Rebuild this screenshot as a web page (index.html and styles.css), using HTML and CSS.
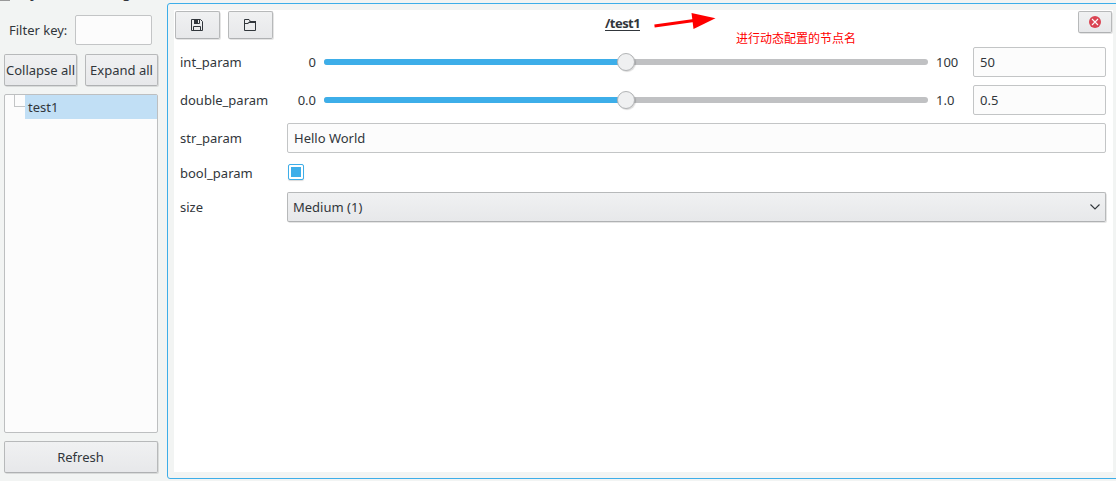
FILE: index.html
```html
<!DOCTYPE html>
<html lang="en">
<head>
<meta charset="utf-8">
<title>Dynamic Reconfigure</title>
<link rel="stylesheet" href="styles.css">
</head>
<body>
<div class="app">
  <div class="titlebar"><span class="title-icon"></span><span class="title">Dynamic Reconfigure</span></div>
  <aside class="sidebar">
    <div class="filter"><span class="filter-label">Filter key:</span><div class="field filter-field"></div></div>
    <div class="actions"><div class="button">Collapse all</div><div class="button">Expand all</div></div>
    <div class="tree"><div class="tree-row"><span class="branch"></span><span class="tree-item">test1</span></div></div>
    <div class="button refresh">Refresh</div>
  </aside>
  <main class="panel">
    <div class="content">
      <header class="head">
        <div class="button tool">
          <svg width="12" height="12" viewBox="0 0 12 12"><path d="M.5.5H9.500L11.500 2.500V11.500H.5Z M2.500 11V7.500H9.500V11 M8.500 1V4.500H3.500" fill="none" stroke="#31363b"/><path d="M3 0H7V5H3Z" fill="#31363b"/></svg>
        </div>
        <div class="button tool">
          <svg width="12" height="12" viewBox="0 0 12 12"><path d="M.5 11.500V.5H5L6.500 2.500H11.500V11.500Z" fill="none" stroke="#31363b"/><path d="M6 2H12V4H5L4 5H1V4H3.500Z" fill="#31363b"/></svg>
        </div>
        <div class="node-name">/test1</div>
        <div class="button close">
          <svg width="12" height="12" viewBox="0 0 12 12"><circle cx="6" cy="6" r="6" fill="#da4453"/><path d="M3 3L9 9M9 3L3 9" stroke="#fcfcfc" stroke-width="1.100"/></svg>
        </div>
      </header>
      <div class="row slider-row">
        <span class="label">int_param</span><span class="min">0</span>
        <div class="slider"><div class="fill"></div><div class="knob"></div></div>
        <span class="max">100</span><div class="field">50</div>
      </div>
      <div class="row slider-row">
        <span class="label">double_param</span><span class="min">0.0</span>
        <div class="slider"><div class="fill"></div><div class="knob"></div></div>
        <span class="max">1.0</span><div class="field">0.5</div>
      </div>
      <div class="row"><span class="label">str_param</span><div class="field">Hello World</div></div>
      <div class="row check-row"><span class="label">bool_param</span><div class="checkbox"></div></div>
      <div class="row"><span class="label">size</span>
        <div class="button combo"><span>Medium (1)</span><svg width="10" height="6" viewBox="0 0 10 6"><path d="M.5.5L5 5L9.500.5" fill="none" stroke="#31363b" stroke-width="1.100"/></svg></div>
      </div>
    </div>
  </main>
  <svg class="arrow" width="64" height="18" viewBox="0 0 64 18"><path d="M1.500 13L41 7.500" stroke="#f00" stroke-width="3"/><path d="M62.500 5.300L38.500 0L40.500 16Z" fill="#f00"/></svg>
  <div class="note" lang="zh-CN">进行动态配置的节点名</div>
</div>
</body>
</html>
```

FILE: styles.css
```css
* { box-sizing: border-box; }
body {
  margin: 0;
  font: 13px/18px "Noto Sans", "Noto Sans CJK SC", sans-serif;
  color: #31363b;
}
.app {
  position: relative;
  display: flex;
  width: 1116px;
  height: 481px;
  overflow: hidden;
  background: #f2f4f3;
}
.titlebar {
  position: absolute;
  left: 0;
  top: -16px;
  display: flex;
  height: 18px;
}
.title-icon { width: 10px; height: 17px; margin-right: 11px; background: #999; }
.title { font-weight: 700; line-height: 18px; letter-spacing: -.45px; }
.sidebar { width: 167px; padding: 15px 9px 0 4px; }
.filter { display: flex; align-items: center; height: 30px; }
.filter-label { width: 71px; padding-left: 5px; white-space: nowrap; }
.field {
  height: 30px;
  padding: 5px 6px;
  border: 1px solid #c3c5c6;
  border-radius: 2px;
  background: #fcfcfc;
}
.filter-field { width: 77px; }
.button {
  display: flex;
  align-items: center;
  justify-content: center;
  border: 1px solid #b7b9ba;
  border-bottom-color: #afb1b3;
  border-radius: 2px;
  background: linear-gradient(#f0f1f2, #e7e8ea);
  box-shadow: 1px 1px 0 rgba(0, 0, 0, .1);
  white-space: nowrap;
}
.actions { display: grid; grid-template-columns: 73px 73px; gap: 8px; height: 32px; margin-top: 9px; }
.tree {
  width: 154px;
  height: 339px;
  margin-top: 8px;
  border: 1px solid #bdbfc0;
  border-radius: 2px;
  background: #fcfcfc;
}
.tree-row { display: flex; height: 24px; }
.branch { width: 11px; height: 12px; margin-left: 9px; border: solid #c3c5c6; border-width: 0 0 1px 1px; }
.tree-item { flex: 1; padding: 3px; background: #c1dff5; }
.refresh { width: 154px; height: 32px; margin-top: 8px; padding-right: 1px; }
.panel {
  flex: none;
  width: 955px;
  height: 476px;
  margin-top: 3px;
  padding: 6px;
  border: 1px solid #3daee9;
  border-radius: 3px;
}
.content { width: 939px; height: 462px; padding: 1px 7px 0 1px; background: #fff; }
.head { display: flex; align-items: flex-start; height: 36px; }
.tool { width: 45px; height: 28px; margin-right: 8px; padding-right: 1px; }
.node-name {
  margin: 4px 0 0 324px;
  height: 16px;
  line-height: 17px;
  font-weight: 700;
  letter-spacing: -.55px;
  border-bottom: 1px solid #31363b;
}
.close { width: 34px; height: 22px; margin-left: auto; margin-right: -6px; }
.row {
  display: grid;
  grid-template-columns: 107px 819px;
  align-items: center;
  width: 931px;
  height: 30px;
  margin-bottom: 8px;
  padding-left: 5px;
}
.slider-row { grid-template-columns: 107px 29px 620px 37px 133px; }
.min { text-align: right; }
.slider { display: flex; align-items: center; width: 604px; height: 6px; margin-left: 8px; border-radius: 3px; background: #c0c1c3; }
.fill { width: 300px; height: 6px; border-radius: 3px 0 0 3px; background: #3daee9; }
.knob {
  flex: none;
  width: 18px;
  height: 18px;
  margin-left: -7px;
  border: 1px solid #b2b4b6;
  border-radius: 50%;
  background: #eff0f1;
  box-shadow: 1px 1px 1px rgba(0, 0, 0, .15);
}
.check-row { height: 23px; }
.check-row .label { padding-top: 1px; }
.checkbox {
  width: 16px;
  height: 16px;
  margin: 0 0 2px 1px;
  padding: 2px;
  border: 1px solid #3daee9;
  border-radius: 2px;
  background: #3daee9 content-box;
  box-shadow: 0 1px 1px rgba(0, 0, 0, .15);
}
.check-row .checkbox { justify-self: start; }
.combo { justify-content: space-between; padding: 0 5px; height: 30px; }
.arrow { position: absolute; left: 653px; top: 13px; }
.note { position: absolute; left: 736px; top: 29px; font: 12px/18px "Noto Sans CJK SC", sans-serif; color: #f00; }
```
